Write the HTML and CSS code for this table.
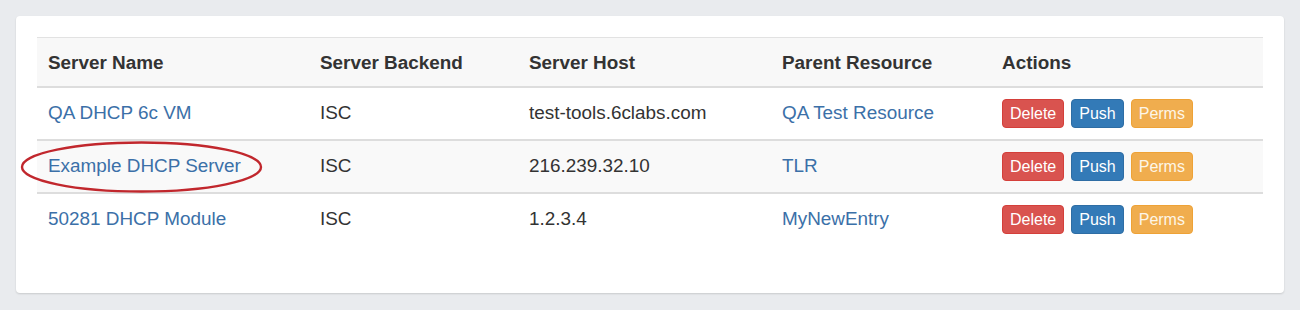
FILE: index.html
```html
<!DOCTYPE html>
<html lang="en">
<head>
<meta charset="utf-8">
<title>DHCP Servers</title>
<link rel="stylesheet" href="styles.css">
</head>
<body>
<div class="card">
  <table class="servers">
    <colgroup>
      <col class="c-name"><col class="c-backend"><col class="c-host"><col class="c-parent"><col class="c-actions">
    </colgroup>
    <thead>
      <tr>
        <th>Server Name</th>
        <th>Server Backend</th>
        <th>Server Host</th>
        <th>Parent Resource</th>
        <th>Actions</th>
      </tr>
    </thead>
    <tbody>
      <tr>
        <td><a href="#">QA DHCP 6c VM</a></td>
        <td>ISC</td>
        <td>test-tools.6clabs.com</td>
        <td><a href="#">QA Test Resource</a></td>
        <td><div class="actions"><a class="btn btn-del" href="#">Delete</a><a class="btn btn-push" href="#">Push</a><a class="btn btn-perms" href="#">Perms</a></div></td>
      </tr>
      <tr class="striped">
        <td class="marked"><a href="#">Example DHCP Server</a>
          <svg class="circle" width="244" height="54" viewBox="0 0 244 54" aria-hidden="true"><ellipse cx="121.5" cy="27" rx="119.5" ry="24.5" fill="none" stroke="#c1272d" stroke-width="2.4"/></svg>
        </td>
        <td>ISC</td>
        <td>216.239.32.10</td>
        <td><a href="#">TLR</a></td>
        <td><div class="actions"><a class="btn btn-del" href="#">Delete</a><a class="btn btn-push" href="#">Push</a><a class="btn btn-perms" href="#">Perms</a></div></td>
      </tr>
      <tr>
        <td><a href="#">50281 DHCP Module</a></td>
        <td>ISC</td>
        <td>1.2.3.4</td>
        <td><a href="#">MyNewEntry</a></td>
        <td><div class="actions"><a class="btn btn-del" href="#">Delete</a><a class="btn btn-push" href="#">Push</a><a class="btn btn-perms" href="#">Perms</a></div></td>
      </tr>
    </tbody>
  </table>
</div>
</body>
</html>
```

FILE: styles.css
```css
html, body {
  margin: 0;
  padding: 0;
}
body {
  background: #e9ebee;
  font-family: "Liberation Sans", Arial, sans-serif;
  font-size: 18.9px;
  line-height: 27px;
  color: #333333;
  padding: 16px;
}
.card {
  background: #ffffff;
  border-radius: 4px;
  box-shadow: 0 1px 2px rgba(0, 0, 0, 0.14);
  padding: 21px 21px 21px 21px;
}
.servers {
  width: 1226px;
  border-collapse: collapse;
  table-layout: fixed;
  margin-bottom: 27px;
}
.c-name { width: 272px; }
.c-backend { width: 209px; }
.c-host { width: 253px; }
.c-parent { width: 220px; }
.c-actions { width: 272px; }
.servers th {
  text-align: left;
  font-weight: bold;
  background: #f8f8f8;
  padding: 11px 11px 10px 11px;
  border-top: 1px solid #e2e2e2;
  border-bottom: 2px solid #dddddd;
  vertical-align: top;
}
.servers td {
  padding: 11px 11px;
  border-top: 2px solid #dddddd;
  vertical-align: top;
}
.servers tbody tr:first-child td {
  border-top: 0;
}
.servers tr.striped td {
  background: #f9f9f9;
}
.servers a {
  color: #3b70a8;
  text-decoration: none;
}
.marked {
  position: relative;
}
.circle {
  position: absolute;
  left: -17px;
  top: -1px;
  overflow: visible;
  pointer-events: none;
}
.actions {
  display: flex;
  gap: 7px;
}
.servers a.btn {
  display: inline-block;
  font-size: 16px;
  line-height: 25px;
  padding: 1px 7px;
  border: 1px solid transparent;
  border-radius: 4px;
  color: #ffffff;
}
.servers a.btn-del {
  background: #d9534f;
  border-color: #d43f3a;
}
.servers a.btn-push {
  background: #337ab7;
  border-color: #2e6da4;
}
.servers a.btn-perms {
  background: #f0ad4e;
  border-color: #eea236;
  color: #fdf6e8;
}
```
